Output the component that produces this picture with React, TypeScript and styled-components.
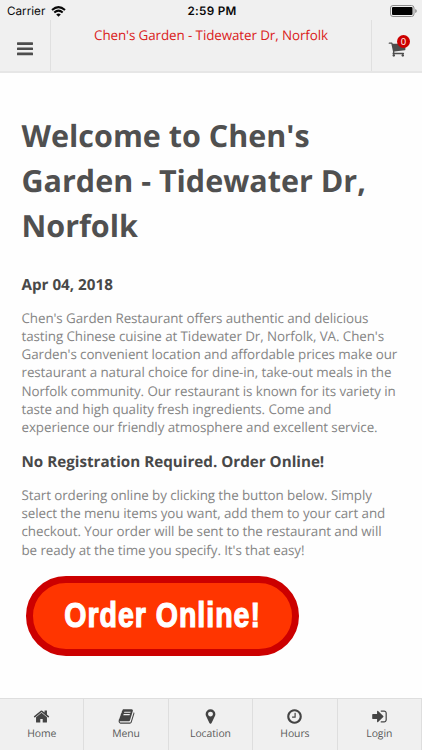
import React from "react";
import styled, { createGlobalStyle } from "styled-components";

const Global = createGlobalStyle`
  * { box-sizing: border-box; }
  body { margin: 0; background: #fff; font-family: "Open Sans", sans-serif; text-rendering: geometricPrecision; }
  h1, h2, p { margin: 0; }
`;

const Screen = styled.div`
  width: 422px;
  height: 750px;
  display: flex;
  flex-direction: column;
  background: #fefefe;
  overflow: hidden;
`;

const StatusBar = styled.div`
  height: 20px;
  flex: none;
  display: grid;
  grid-template-columns: 1fr auto 1fr;
  align-items: center;
  padding: 2px 5px 0 7px;
  background: #f0f0f0;
  color: #080808;
  font-family: Inter, sans-serif;
  font-size: 11.7px;
  line-height: 18px;
`;

const Carrier = styled.div`
  display: flex;
  align-items: center;
  gap: 6px;
`;

const Clock = styled.div`
  font-weight: 600;
  font-size: 11.7px;
  letter-spacing: 0.3px;
`;

const Battery = styled.svg`
  justify-self: end;
`;

const Header = styled.header`
  height: 53px;
  flex: none;
  display: flex;
  background: #f0f0f0;
  border-bottom: 2px solid #e6e6e6;
`;

const HeaderButton = styled.button<{ $side: "left" | "right" }>`
  width: 51px;
  padding: 6px 0 0;
  border: 0;
  border-${(p) => (p.$side === "left" ? "right" : "left")}: 1px solid #e0e0e0;
  background: none;
  display: flex;
  align-items: center;
  justify-content: center;
  color: #4d4d4d;
`;

const Title = styled.div`
  flex: 1;
  padding-top: 5px;
  text-align: center;
  white-space: nowrap;
  color: #da2020;
  font-size: 13.4px;
  letter-spacing: -0.09px;
  line-height: 20px;
`;

const CartWrap = styled.span`
  position: relative;
  display: flex;
`;

const Badge = styled.span`
  position: absolute;
  left: 9px;
  top: -5px;
  width: 13px;
  height: 13px;
  border-radius: 50%;
  background: #cc0000;
  color: #fff;
  font: 9.5px/13px "Open Sans", sans-serif;
  text-align: center;
`;

const Content = styled.main`
  flex: 1;
  padding: 40px 20px 0 21.5px;
`;

const Heading = styled.h1`
  color: #505050;
  font-size: 30.5px;
  line-height: 45px;
  font-weight: 700;
  white-space: nowrap;
`;

const SubHeading = styled.h2<{ $top: number }>`
  margin-top: ${(p) => p.$top}px;
  color: #484848;
  font-size: 15.2px;
  line-height: 20px;
  font-weight: 700;
  white-space: nowrap;
`;

const Copy = styled.p<{ $top: number }>`
  margin-top: ${(p) => p.$top}px;
  color: #858585;
  font-size: 13.4px;
  letter-spacing: -0.09px;
  line-height: 18.33px;
  white-space: nowrap;
`;

const OrderButton = styled.button`
  display: flex;
  align-items: center;
  justify-content: center;
  width: 273px;
  height: 80px;
  margin: 16.5px 0 0 4.5px;
  padding: 0 0 2px;
  border: 7px solid #cc0000;
  border-radius: 40px;
  background: #ff3500;
  color: #fff;
`;

const OrderLabel = styled.span`
  font: 700 35px/40px "Liberation Sans", sans-serif;
  white-space: nowrap;
  letter-spacing: 1.2px;
  -webkit-text-stroke: 1.2px #fff;
  transform: scaleX(0.815);
`;

const TabBar = styled.nav`
  height: 52px;
  flex: none;
  display: grid;
  grid-template-columns: repeat(5, 1fr);
  background: #f0f0f0;
  border-top: 1px solid #dedede;
`;

const Tab = styled.button`
  display: flex;
  flex-direction: column;
  align-items: center;
  padding: 9px 0 0;
  border: 0;
  border-right: 1px solid #dedede;
  background: none;
  color: #444;
  font: 10.4px/16px "Open Sans", sans-serif;
  letter-spacing: -0.08px;
  text-rendering: geometricPrecision;
`;

const TabLabel = styled.span`
  color: #5a5a5a;
  margin-top: 1px;
`;

const paths = {
  home: "M1472 992v480q0 26-19 45t-45 19h-384v-384h-256v384h-384q-26 0-45-19t-19-45v-480q0-1 .5-3t.5-3l575-474 575 474q1 2 1 6zm223-69l-62 74q-8 9-21 11h-3q-13 0-21-7l-692-577-692 577q-12 8-24 7-13-2-21-11l-62-74q-8-10-7-23.5t11-21.5l719-599q32-26 76-26t76 26l244 204v-195q0-14 9-23t23-9h192q14 0 23 9t9 23v408l219 182q10 8 11 21.5t-7 23.5z",
  book: "M1703 478q40 57 18 129l-275 906q-19 64-76.5 107.5t-122.5 43.5h-923q-77 0-148.5-53.5t-99.5-131.5q-24-67-2-127 0-4 3-27t4-37q1-8-3-21.5t-3-19.5q2-11 8-21t16.5-23.5 16.5-23.5q23-38 45-91.5t30-91.5q3-10 .5-30t-.5-28q3-11 17-28t17-23q21-36 42-92t25-90q1-9-2.5-32t.5-28q4-13 22-30.5t22-22.5q19-26 42.5-84.5t27.5-96.5q1-8-3-25.5t-2-26.5q2-8 9-18t18-23 17-21q8-12 16.5-30.5t15-35 16-36 19.5-32 26.5-23.5 36-11.5 47.5 5.5l-1 3q38-9 51-9h761q74 0 114 56t18 130l-274 906q-36 119-71.5 153.5t-128.5 34.5h-869q-27 0-38 15-11 16-1 43 24 70 144 70h923q29 0 56-15.5t35-41.5l300-987q7-22 5-57 38 15 59 43zm-1064 2q-4 13 2 22.5t20 9.5h608q13 0 25.5-9.5t16.5-22.5l21-64q4-13-2-22.5t-20-9.5h-608q-13 0-25.5 9.5t-16.5 22.5zm-83 256q-4 13 2 22.5t20 9.5h608q13 0 25.5-9.5t16.5-22.5l21-64q4-13-2-22.5t-20-9.5h-608q-13 0-25.5 9.5t-16.5 22.5z",
  marker: "M1152 640q0-106-75-181t-181-75-181 75-75 181 75 181 181 75 181-75 75-181zm256 0q0 109-33 179l-364 774q-16 33-47.5 52t-67.5 19-67.5-19-46.5-52l-365-774q-33-70-33-179 0-212 150-362t362-150 362 150 150 362z",
  clock: "M1024 544v448q0 14-9 23t-23 9h-320q-14 0-23-9t-9-23v-64q0-14 9-23t23-9h224v-352q0-14 9-23t23-9h64q14 0 23 9t9 23zm416 352q0-148-73-273t-198-198-273-73-273 73-198 198-73 273 73 273 198 198 273 73 273-73 198-198 73-273zm224 0q0 209-103 385.5t-279.5 279.5-385.5 103-385.5-103-279.5-279.5-103-385.5 103-385.5 279.5-279.5 385.5-103 385.5 103 279.5 279.5 103 385.5z",
  login: "M1312 896q0 26-19 45l-544 544q-19 19-45 19t-45-19-19-45v-288h-448q-26 0-45-19t-19-45v-384q0-26 19-45t45-19h448v-288q0-26 19-45t45-19 45 19l544 544q19 19 19 45zm352-352v704q0 119-84.5 203.5t-203.5 84.5h-320q-13 0-22.5-9.5t-9.5-22.5q0-4-1-20t-.5-26.5 3-23.5 10-19.5 20.5-6.5h320q66 0 113-47t47-113v-704q0-66-47-113t-113-47h-312l-11.5-1-11.5-3-8-5.5-7-9-2-13.5q0-4-1-20t-.5-26.5 3-23.5 10-19.5 20.5-6.5h320q119 0 203.5 84.5t84.5 203.5z",
  cart: "M704 1536q0 52-38 90t-90 38-90-38-38-90 38-90 90-38 90 38 38 90zm896 0q0 52-38 90t-90 38-90-38-38-90 38-90 90-38 90 38 38 90zm128-1088v512q0 24-16.5 42.5t-40.5 21.5l-1044 122q13 60 13 70 0 16-24 64h920q26 0 45 19t19 45-19 45-45 19h-1024q-26 0-45-19t-19-45q0-11 8-31.5t16-36 21.5-40 15.5-29.5l-177-823h-204q-26 0-45-19t-19-45 19-45 45-19h256q16 0 28.5 6.5t19.5 15.5 13 24.5 8 26 5.5 29.5 4.5 26h1201q26 0 45 19t19 45z",
};

type IconName = keyof typeof paths;

const Icon = ({ name, size }: { name: IconName; size: number }) => (
  <svg width={size} height={size} viewBox="0 0 1792 1792" fill="currentColor" aria-hidden="true">
    <path d={paths[name]} />
  </svg>
);

const tabs: { icon: IconName; label: string }[] = [
  { icon: "home", label: "Home" },
  { icon: "book", label: "Menu" },
  { icon: "marker", label: "Location" },
  { icon: "clock", label: "Hours" },
  { icon: "login", label: "Login" },
];

const Lines = ({ lines }: { lines: string[] }) => (
  <>
    {lines.map((line, i) => (
      <React.Fragment key={line}>
        {i > 0 && <br />}
        {line}
      </React.Fragment>
    ))}
  </>
);

export default function App() {
  return (
    <>
      <Global />
      <Screen>
        <StatusBar>
          <Carrier>
            Carrier
            <svg width="15" height="11" viewBox="0 0 15 11" fill="none" stroke="#080808" strokeWidth="2">
              <path d="M1 4.1Q7.5-1.9 14 4.1M3.3 6.5Q7.5 2.7 11.7 6.5" />
              <path d="M5.2 8.4Q7.5 6.4 9.8 8.4L7.5 10.8Z" fill="#080808" stroke="none" />
            </svg>
          </Carrier>
          <Clock>2:59 PM</Clock>
          <Battery width="27" height="12" viewBox="0 0 27 12">
            <rect x="0.5" y="0.5" width="23.5" height="11" rx="2.5" fill="none" stroke="#8c8c8c" />
            <rect x="2" y="2" width="20.5" height="8" rx="1" fill="#000" />
            <path d="M25.2 4q1.6.6 1.6 2t-1.6 2z" fill="#8c8c8c" />
          </Battery>
        </StatusBar>
        <Header>
          <HeaderButton $side="left" aria-label="Open navigation">
            <svg width="16" height="14" viewBox="0 0 16 14" fill="currentColor">
              <rect y="0.2" width="16" height="2.7" rx="0.6" />
              <rect y="5.4" width="16" height="2.7" rx="0.6" />
              <rect y="10.6" width="16" height="2.7" rx="0.6" />
            </svg>
          </HeaderButton>
          <Title>Chen's Garden - Tidewater Dr, Norfolk</Title>
          <HeaderButton $side="right" aria-label="Cart">
            <CartWrap>
              <Icon name="cart" size={18} />
              <Badge>0</Badge>
            </CartWrap>
          </HeaderButton>
        </Header>
        <Content>
          <Heading>
            <Lines lines={["Welcome to Chen's", "Garden - Tidewater Dr,", "Norfolk"]} />
          </Heading>
          <SubHeading $top={27}>Apr 04, 2018</SubHeading>
          <Copy $top={13.5}>
            <Lines
              lines={[
                "Chen's Garden Restaurant offers authentic and delicious",
                "tasting Chinese cuisine at Tidewater Dr, Norfolk, VA. Chen's",
                "Garden's convenient location and affordable prices make our",
                "restaurant a natural choice for dine-in, take-out meals in the",
                "Norfolk community. Our restaurant is known for its variety in",
                "taste and high quality fresh ingredients. Come and",
                "experience our friendly atmosphere and excellent service.",
              ]}
            />
          </Copy>
          <SubHeading $top={15.5}>No Registration Required. Order Online!</SubHeading>
          <Copy $top={13.5}>
            <Lines
              lines={[
                "Start ordering online by clicking the button below. Simply",
                "select the menu items you want, add them to your cart and",
                "checkout. Your order will be sent to the restaurant and will",
                "be ready at the time you specify. It's that easy!",
              ]}
            />
          </Copy>
          <OrderButton>
            <OrderLabel>Order Online!</OrderLabel>
          </OrderButton>
        </Content>
        <TabBar>
          {tabs.map((tab) => (
            <Tab key={tab.label}>
              <Icon name={tab.icon} size={17} />
              <TabLabel>{tab.label}</TabLabel>
            </Tab>
          ))}
        </TabBar>
      </Screen>
    </>
  );
}
